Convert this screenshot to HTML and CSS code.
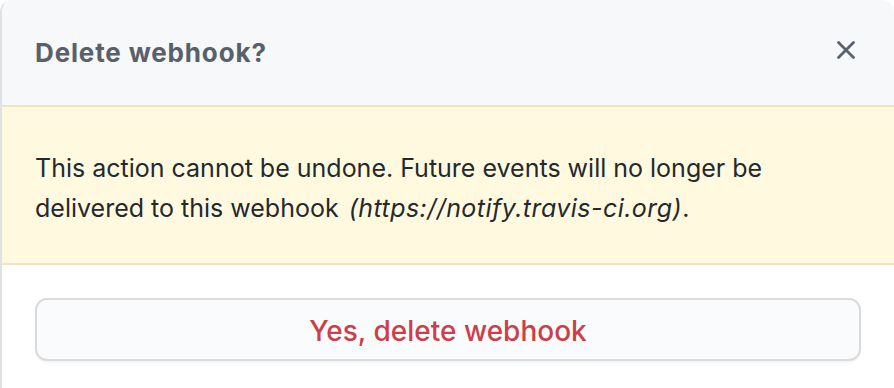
FILE: index.html
```html
<!DOCTYPE html>
<html lang="en">
<head>
<meta charset="utf-8">
<title>Delete webhook?</title>
<link rel="stylesheet" href="styles.css">
</head>
<body>
<div class="dialog">
  <div class="dialog-header">
    <h3 class="dialog-title">Delete webhook?</h3>
    <button class="close-btn" aria-label="Close dialog">
      <svg width="20" height="20" viewBox="0 0 20 20" aria-hidden="true">
        <path d="M2.5 2.5 L17.5 17.5 M17.5 2.5 L2.5 17.5" stroke="currentColor" stroke-width="2.8" stroke-linecap="round" fill="none"/>
      </svg>
    </button>
  </div>
  <div class="flash-warn">
    This action cannot be undone. Future events will no longer be delivered to this webhook <em>(https://notify.travis-ci.org)</em>.
  </div>
  <div class="dialog-body">
    <button class="btn-danger">Yes, delete webhook</button>
  </div>
</div>
</body>
</html>
```
FILE: styles.css
```css
html, body {
  margin: 0;
  padding: 0;
  background: #ffffff;
}
body {
  font-family: Inter, "Noto Sans", "Liberation Sans", sans-serif;
  width: 894px;
  height: 388px;
  overflow: hidden;
}
.dialog {
  border-left: 2px solid #dfe2e5;
  border-top-left-radius: 12px;
  border-top-right-radius: 12px;
  height: 400px;
  background: #fff;
  overflow: hidden;
}
.dialog-header {
  background: #f6f8fa;
  display: flex;
  align-items: center;
  justify-content: space-between;
  padding: 0 38px 0 33px;
  border-bottom: 2px solid #efe6bf;
  box-sizing: border-box;
  height: 107px;
}
.dialog-title {
  margin: 0;
  font-size: 26px;
  font-weight: 700;
  letter-spacing: 0.85px;
  color: #586069;
}
.close-btn {
  background: none;
  border: 0;
  padding: 0;
  margin-top: -6px;
  color: #586069;
  display: flex;
  width: 20px;
  height: 20px;
}
.flash-warn {
  background: #fffadf;
  border-bottom: 2px solid #efe6bf;
  padding: 41px 33px 0 33px;
  font-size: 25px;
  line-height: 40px;
  color: #24292e;
  height: 158px;
  box-sizing: border-box;
}
.flash-warn em {
  font-style: italic;
  letter-spacing: 0.45px;
  padding-left: 3px;
}
.dialog-body {
  padding: 33px 33px 0 33px;
}
.btn-danger {
  display: block;
  width: 100%;
  height: 63px;
  border: 2px solid #d9dbdd;
  border-radius: 12px;
  background: #fafbfc;
  color: #cc3f48;
  font-family: Inter, "Noto Sans", "Liberation Sans", sans-serif;
  font-size: 28px;
  font-weight: 500;
  padding: 2px 0 0 0;
  box-shadow: 0 2px 0 rgba(27, 31, 35, 0.04);
}
```
